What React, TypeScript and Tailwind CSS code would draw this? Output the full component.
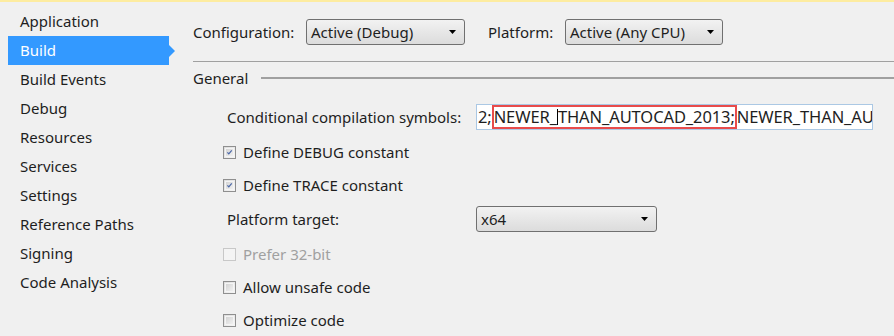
import React from "react"

const font = { fontFamily: '"Noto Sans", "Open Sans", sans-serif' }

const navItems = [
  "Application",
  "Build",
  "Build Events",
  "Debug",
  "Resources",
  "Services",
  "Settings",
  "Reference Paths",
  "Signing",
  "Code Analysis",
]

function Arrow() {
  return (
    <svg width="7" height="4" viewBox="0 0 7 4" className="shrink-0">
      <path d="M0 0h7L3.5 4z" fill="#000" />
    </svg>
  )
}

function Dropdown({ value, className }: { value: string; className: string }) {
  return (
    <div
      className={
        "flex items-center justify-between rounded-[3px] border border-[#707070] bg-gradient-to-b from-[#f2f2f2] to-[#dcdcdc] pl-[4px] pr-[8px] text-[#1e1e1e] " +
        className
      }
    >
      <span>{value}</span>
      <Arrow />
    </div>
  )
}

function Checkbox({ checked, disabled }: { checked?: boolean; disabled?: boolean }) {
  return (
    <div
      className={
        "flex h-[13px] w-[13px] shrink-0 items-center justify-center border " +
        (disabled
          ? "border-[#c8c8c8] bg-[#f4f4f4]"
          : "border-[#8f8f8f] bg-gradient-to-br from-[#dcdcdc] to-[#f6f6f6]")
      }
    >
      {!disabled && (
        <div className="flex h-[9px] w-[9px] items-center justify-center border border-[#f4f4f4] bg-gradient-to-br from-[#d4d4d4] to-[#f0f0f0]">
          {checked && (
            <svg width="9" height="9" viewBox="0 0 9 9">
              <path d="M1.8 4.4l1.8 2L7.4 1.8" stroke="#4a67a8" strokeWidth="1.5" fill="none" />
            </svg>
          )}
        </div>
      )}
    </div>
  )
}

function CheckRow({
  label,
  checked,
  disabled,
  h,
}: {
  label: string
  checked?: boolean
  disabled?: boolean
  h: string
}) {
  return (
    <div className={"flex items-center gap-[7px] pl-[30px] " + h}>
      <Checkbox checked={checked} disabled={disabled} />
      <span className={disabled ? "text-[#a0a0a0]" : "text-[#1e1e1e]"}>{label}</span>
    </div>
  )
}

export default function App() {
  return (
    <div
      className="relative h-[336px] w-[894px] overflow-hidden bg-[#f0f0f0] text-[15px] text-[#1e1e1e]"
      style={font}
    >
      <div className="h-[2px] bg-[#fdeca0]" />
      <div className="flex">
        {/* sidebar */}
        <div className="w-[193px] shrink-0 pl-[8px] pt-[5px]">
          {navItems.map((item) =>
            item === "Build" ? (
              <div key={item} className="flex h-[29px] items-center">
                <div className="flex h-full w-[161px] items-center bg-[#3399ff] px-[12px] text-white">
                  {item}
                </div>
                <div className="h-0 w-0 border-y-[6px] border-l-[6px] border-y-transparent border-l-[#3399ff]" />
              </div>
            ) : (
              <div key={item} className="flex h-[29px] items-center px-[12px]">
                {item}
              </div>
            )
          )}
        </div>

        {/* build page */}
        <div className="flex-1">
          <div className="mt-[17px] flex h-[26px] items-center">
            <span className="w-[113px]">Configuration:</span>
            <Dropdown value="Active (Debug)" className="h-[26px] w-[159px]" />
            <span className="ml-[23px] w-[77px]">Platform:</span>
            <Dropdown value="Active (Any CPU)" className="h-[26px] w-[158px]" />
          </div>
          <div className="mt-[16px] h-px bg-[#a0a0a0]" />
          <div className="flex h-[32px] items-center">
            <span>General</span>
            <div className="ml-[13px] h-[2px] flex-1 bg-[#a0a0a0]" />
          </div>

          <div className="mt-[6px] flex h-[34px] items-center pl-[34px]">
            <span className="w-[249px]">Conditional compilation symbols:</span>
            <div className="flex h-[26px] w-[397px] items-stretch overflow-hidden whitespace-nowrap border border-[#abc8e4] bg-white pl-[1px] text-[16.5px] tracking-[-0.1px]">
              <span className="flex items-center">2;</span>
              <span className="flex items-center border-2 border-[#e84b4b]">
                NEWER_<span className="h-[16px] w-px bg-black" />THAN_AUTOCAD_2013;
              </span>
              <span className="flex items-center">NEWER_THAN_AUTOCAD_2013</span>
            </div>
          </div>

          <CheckRow label="Define DEBUG constant" checked h="h-[36px]" />
          <CheckRow label="Define TRACE constant" checked h="h-[30px]" />

          <div className="flex h-[38px] items-center pl-[34px]">
            <span className="w-[249px]">Platform target:</span>
            <Dropdown value="x64" className="h-[26px] w-[181px]" />
          </div>

          <CheckRow label="Prefer 32-bit" disabled h="h-[32px]" />
          <CheckRow label="Allow unsafe code" h="h-[34px]" />
          <CheckRow label="Optimize code" h="h-[33px]" />
        </div>
      </div>
    </div>
  )
}
